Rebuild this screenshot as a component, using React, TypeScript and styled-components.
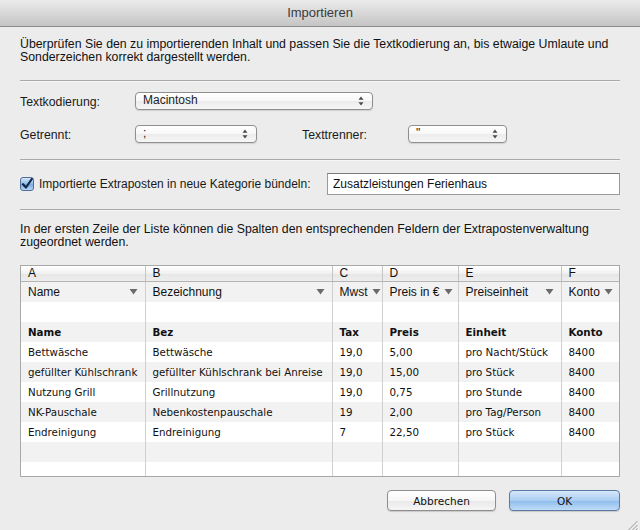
import React from "react";
import styled, { createGlobalStyle } from "styled-components";

const GlobalStyle = createGlobalStyle`
  html, body {
    margin: 0;
    padding: 0;
    background: #ececec;
  }
  body {
    font-family: "Liberation Sans", Arial, sans-serif;
    color: #1a1a1a;
  }
`;

type Row = {
  name: string;
  bez: string;
  tax: string;
  preis: string;
  einheit: string;
  konto: string;
};

const rows: Row[] = [
  { name: "Bettwäsche", bez: "Bettwäsche", tax: "19,0", preis: "5,00", einheit: "pro Nacht/Stück", konto: "8400" },
  { name: "gefüllter Kühlschrank", bez: "gefüllter Kühlschrank bei Anreise", tax: "19,0", preis: "15,00", einheit: "pro Stück", konto: "8400" },
  { name: "Nutzung Grill", bez: "Grillnutzung", tax: "19,0", preis: "0,75", einheit: "pro Stunde", konto: "8400" },
  { name: "NK-Pauschale", bez: "Nebenkostenpauschale", tax: "19", preis: "2,00", einheit: "pro Tag/Person", konto: "8400" },
  { name: "Endreinigung", bez: "Endreinigung", tax: "7", preis: "22,50", einheit: "pro Stück", konto: "8400" },
];

const columns = [
  { letter: "A", field: "Name", width: 124 },
  { letter: "B", field: "Bezeichnung", width: 187 },
  { letter: "C", field: "Mwst", width: 50 },
  { letter: "D", field: "Preis in €", width: 76 },
  { letter: "E", field: "Preiseinheit", width: 103 },
  { letter: "F", field: "Konto", width: 58 },
];

const Stepper = () => (
  <svg width="6" height="10" viewBox="0 0 6 10">
    <path d="M3 0.5 L5.5 3.8 L0.5 3.8 Z" fill="#4a4a4a" />
    <path d="M3 9.5 L5.5 6.2 L0.5 6.2 Z" fill="#4a4a4a" />
  </svg>
);

const DownArrow = () => (
  <svg width="9" height="7" viewBox="0 0 9 7">
    <path d="M0.5 1 L8.5 1 L4.5 6.5 Z" fill="#6b6b6b" />
  </svg>
);

const App = () => {
  return (
    <>
      <GlobalStyle />
      <Window>
        <TitleBar>Importieren</TitleBar>
        <Content>
          <Intro>
            Überprüfen Sie den zu importierenden Inhalt und passen Sie die Textkodierung an, bis etwaige Umlaute und
            <br />
            Sonderzeichen korrekt dargestellt werden.
          </Intro>
          <Separator />
          <FormRow $top={9}>
            <Label $width={115}>Textkodierung:</Label>
            <Popup $width={238}>
              <span>Macintosh</span>
              <Stepper />
            </Popup>
          </FormRow>
          <FormRow $top={14}>
            <Label $width={115}>Getrennt:</Label>
            <Popup $width={122}>
              <span>;</span>
              <Stepper />
            </Popup>
            <Label $width={106} $left={45}>Texttrenner:</Label>
            <Popup $width={99}>
              <span>"</span>
              <Stepper />
            </Popup>
          </FormRow>
          <Separator $top={16} />
          <CheckRow>
            <CheckBox>
              <svg width="12" height="12" viewBox="0 0 12 12">
                <path d="M2 6.2 L5 9.5 L10.8 1" stroke="#10284a" strokeWidth="2.2" fill="none" strokeLinecap="round" strokeLinejoin="round" />
              </svg>
            </CheckBox>
            <CheckLabel>Importierte Extraposten in neue Kategorie bündeln:</CheckLabel>
            <TextInput readOnly value="Zusatzleistungen Ferienhaus" />
          </CheckRow>
          <Separator $top={14} />
          <Intro $top={12}>
            In der ersten Zeile der Liste können die Spalten den entsprechenden Feldern der Extrapostenverwaltung
            <br />
            zugeordnet werden.
          </Intro>
          <TableBox>
            <Grid>
              <colgroup>
                {columns.map((c) => (
                  <col key={c.letter} style={{ width: c.width }} />
                ))}
              </colgroup>
              <thead>
                <tr>
                  {columns.map((c) => (
                    <LetterCell key={c.letter}>{c.letter}</LetterCell>
                  ))}
                </tr>
              </thead>
              <tbody>
                <BodyRow $striped>
                  {columns.map((c) => (
                    <FieldCell key={c.letter}>
                      <FieldInner>
                        <span>{c.field}</span>
                        <DownArrow />
                      </FieldInner>
                    </FieldCell>
                  ))}
                </BodyRow>
                <BodyRow>
                  {columns.map((c) => (
                    <DataCell key={c.letter} />
                  ))}
                </BodyRow>
                <BodyRow $striped>
                  <DataCell $bold>Name</DataCell>
                  <DataCell $bold>Bez</DataCell>
                  <DataCell $bold>Tax</DataCell>
                  <DataCell $bold>Preis</DataCell>
                  <DataCell $bold>Einheit</DataCell>
                  <DataCell $bold>Konto</DataCell>
                </BodyRow>
                {rows.map((r, i) => (
                  <BodyRow key={r.name} $striped={i % 2 === 1}>
                    <DataCell>{r.name}</DataCell>
                    <DataCell>{r.bez}</DataCell>
                    <DataCell>{r.tax}</DataCell>
                    <DataCell>{r.preis}</DataCell>
                    <DataCell>{r.einheit}</DataCell>
                    <DataCell>{r.konto}</DataCell>
                  </BodyRow>
                ))}
                <BodyRow $striped>
                  {columns.map((c) => (
                    <DataCell key={c.letter} />
                  ))}
                </BodyRow>
                <BodyRow>
                  {columns.map((c) => (
                    <DataCell key={c.letter} />
                  ))}
                </BodyRow>
              </tbody>
            </Grid>
          </TableBox>
          <ButtonBar>
            <Button>Abbrechen</Button>
            <Button $primary>OK</Button>
          </ButtonBar>
        </Content>
        <Grip>
          <svg width="11" height="11" viewBox="0 0 11 11">
            <path d="M10.5 1 L1 10.5 M10.5 5 L5 10.5 M10.5 8.5 L8.5 10.5" stroke="#9a9a9a" strokeWidth="1" />
          </svg>
        </Grip>
      </Window>
    </>
  );
};

const Window = styled.div`
  position: relative;
  width: 640px;
  height: 530px;
  background: #ececec;
  overflow: hidden;
`;

const TitleBar = styled.div`
  height: 26px;
  line-height: 26px;
  text-align: center;
  font-size: 13px;
  color: #3a3a3a;
  background: linear-gradient(#ebebeb, #d4d4d4 60%, #c4c4c4);
  border-bottom: 1px solid #8c8c8c;
`;

const Content = styled.div`
  padding: 0 20px;
`;

const Intro = styled.p<{ $top?: number }>`
  margin: ${(p) => p.$top ?? 11}px 0 0;
  font-size: 12.3px;
  line-height: 13px;
  color: #111;
  white-space: nowrap;
`;

const Separator = styled.div<{ $top?: number }>`
  margin-top: ${(p) => p.$top ?? 16}px;
  height: 1px;
  background: #a9a9a9;
  border-bottom: 1px solid #f6f6f6;
`;

const FormRow = styled.div<{ $top: number }>`
  display: flex;
  align-items: center;
  margin-top: ${(p) => p.$top}px;
  height: 19px;
`;

const Label = styled.div<{ $width: number; $left?: number }>`
  width: ${(p) => p.$width}px;
  margin-left: ${(p) => p.$left ?? 0}px;
  font-size: 12.3px;
  color: #1a1a1a;
  padding-top: 2px;
`;

const Popup = styled.div<{ $width: number }>`
  box-sizing: border-box;
  width: ${(p) => p.$width}px;
  height: 18px;
  display: flex;
  align-items: center;
  justify-content: space-between;
  padding: 0 8px 0 7px;
  border: 1px solid #8f8f8f;
  border-radius: 4px;
  background: linear-gradient(#ffffff, #f7f7f7 50%, #ececec 51%, #f6f6f6);
  box-shadow: 0 1px 1px rgba(0, 0, 0, 0.12);
  font-size: 12px;
  color: #222;

  span {
    margin-top: -2px;
  }
`;

const CheckRow = styled.div`
  display: flex;
  align-items: center;
  margin-top: 12px;
  height: 22px;
`;

const CheckBox = styled.span`
  box-sizing: border-box;
  width: 14px;
  height: 14px;
  display: inline-flex;
  align-items: center;
  justify-content: center;
  border: 1px solid #4f6f98;
  border-radius: 3px;
  background: linear-gradient(#d5e6f8, #8fb9e6 50%, #78a9de 51%, #b6d6f5);
  margin-right: 5px;
`;

const CheckLabel = styled.span`
  font-size: 12px;
  color: #1a1a1a;
  width: 288px;
`;

const TextInput = styled.input`
  box-sizing: border-box;
  width: 293px;
  height: 22px;
  border: 1px solid #9a9a9a;
  border-top-color: #7a7a7a;
  background: #fff;
  font-family: "Liberation Sans", Arial, sans-serif;
  font-size: 12px;
  padding: 0 5px;
  color: #111;
  outline: none;
`;

const TableBox = styled.div`
  margin-top: 16px;
  height: 212px;
  box-sizing: border-box;
  border: 1px solid #a8a8a8;
  background: #fff;
  overflow: hidden;
`;

const Grid = styled.table`
  table-layout: fixed;
  border-collapse: collapse;
  width: 598px;
`;

const LetterCell = styled.th`
  height: 15px;
  padding: 0 7px;
  line-height: 15px;
  text-align: left;
  font-weight: normal;
  font-size: 12px;
  color: #111;
  background: linear-gradient(#ffffff, #f1f1f1 50%, #e6e6e6 51%, #ededed);
  border-bottom: 1px solid #b4b4b4;
  border-left: 1px solid #c4c4c4;

  &:first-child {
    border-left: none;
  }
`;

const BodyRow = styled.tr<{ $striped?: boolean }>`
  height: 20px;
  background: ${(p) => (p.$striped ? "#f2f2f2" : "#ffffff")};
`;

const FieldCell = styled.td`
  padding: 0 7px;
  border-left: 1px solid #cfcfcf;
  font-size: 12px;
  color: #111;

  &:first-child {
    border-left: none;
  }
`;

const FieldInner = styled.div`
  display: flex;
  align-items: center;
  justify-content: space-between;
  white-space: nowrap;

  svg {
    flex-shrink: 0;
    margin-left: 4px;
  }
`;

const DataCell = styled.td<{ $bold?: boolean }>`
  padding: 0 0 0 7px;
  border-left: 1px solid #cfcfcf;
  font-family: "DejaVu Sans", Verdana, sans-serif;
  font-size: 10.3px;
  font-weight: ${(p) => (p.$bold ? "bold" : "normal")};
  color: #111;
  white-space: nowrap;
  overflow: hidden;

  &:first-child {
    border-left: none;
  }
`;

const ButtonBar = styled.div`
  display: flex;
  justify-content: flex-end;
  gap: 13px;
  margin-top: 13px;
`;

const Button = styled.button<{ $primary?: boolean }>`
  box-sizing: border-box;
  width: ${(p) => (p.$primary ? 111 : 109)}px;
  height: 21px;
  border-radius: 4px;
  border: 1px solid ${(p) => (p.$primary ? "#5b7aa3" : "#8e8e8e")};
  background: ${(p) =>
    p.$primary
      ? "linear-gradient(#d6e8fa, #a9cdf2 50%, #8dbcec 51%, #c0dcf7)"
      : "linear-gradient(#ffffff, #f6f6f6 50%, #e9e9e9 51%, #f5f5f5)"};
  box-shadow: 0 1px 1px rgba(0, 0, 0, 0.15);
  font-family: "DejaVu Sans", Verdana, sans-serif;
  font-size: 10.5px;
  color: #111;
  padding: 0;
`;

const Grip = styled.div`
  position: absolute;
  right: 2px;
  bottom: 2px;
  width: 11px;
  height: 11px;
`;

export default App;
